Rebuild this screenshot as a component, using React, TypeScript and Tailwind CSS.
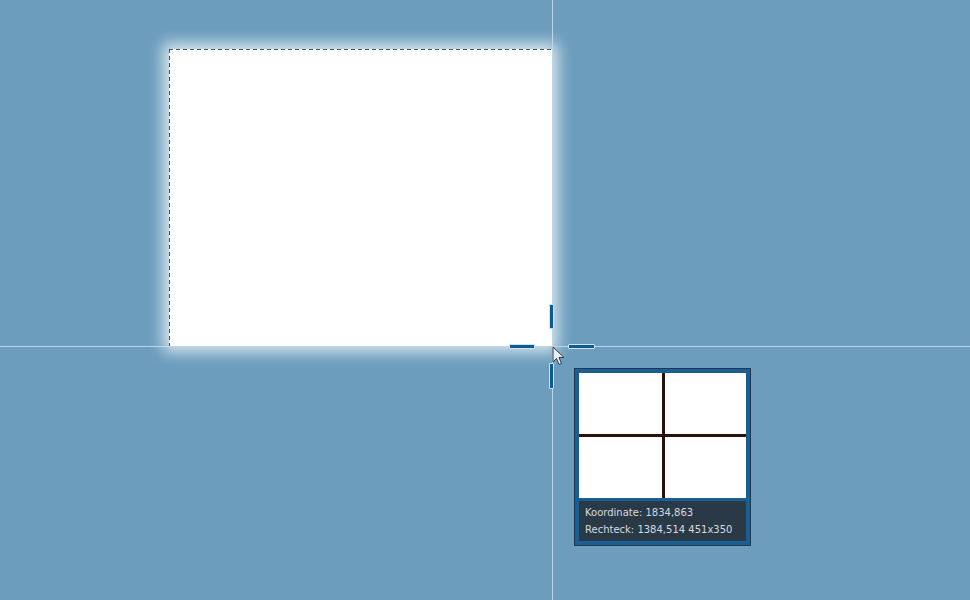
import React from "react";

const handle = "absolute rounded-[1px] border border-[#cfe3f0] bg-[#0e5a92]";

function Cursor() {
  return (
    <svg className="absolute left-[552px] top-[346px]" width="13" height="20" viewBox="0 0 13 20">
      <path d="M1 1 L1 16 L4.5 12.5 L7 18.5 L9.5 17.5 L7 11.5 L12 11.5 Z" fill="#e8eef3" stroke="#2b3a47" strokeWidth="1" strokeLinejoin="round" />
    </svg>
  );
}

function Magnifier() {
  return (
    <div className="absolute left-[574px] top-[368px] flex h-[178px] w-[177px] flex-col gap-[3px] border border-[#22384a] bg-[#1a5f94] p-1">
      {/* zoomed pixels with crosshair */}
      <div className="grid h-[125px] grid-cols-[83px_1fr] grid-rows-[61px_1fr] gap-[3px] bg-[#2a1208]">
        <div className="bg-white" />
        <div className="bg-white" />
        <div className="bg-white" />
        <div className="bg-white" />
      </div>
      <div className="flex flex-1 flex-col justify-center gap-[7px] bg-[#2a3946] px-[6px] font-['DejaVu_Sans',sans-serif] text-[10px] leading-none text-[#d5dbe0]">
        <span>Koordinate: 1834,863</span>
        <span>Rechteck: 1384,514 451x350</span>
      </div>
    </div>
  );
}

export default function App() {
  return (
    <div className="relative h-[600px] w-[970px] overflow-hidden bg-[#6c9dbd]">
      {/* selection */}
      <div className="absolute left-[169px] top-[49px] h-[297px] w-[383px] shadow-[0_0_14px_6px_rgba(255,255,255,0.75)] [background:repeating-linear-gradient(90deg,#2f5c7c_0_4px,transparent_4px_7px)_top_left/100%_1px_no-repeat,repeating-linear-gradient(180deg,#2f5c7c_0_4px,transparent_4px_7px)_top_left/1px_100%_no-repeat,white]" />

      {/* crosshair lines */}
      <div className="absolute left-[552px] top-0 h-full w-px bg-[#bcd6e8]" />
      <div className="absolute left-0 top-[346px] h-px w-full bg-[#bcd6e8]" />

      {/* handles */}
      <div className={`${handle} left-[549px] top-[304px] h-[25px] w-[5px]`} />
      <div className={`${handle} left-[549px] top-[363px] h-[26px] w-[5px]`} />
      <div className={`${handle} left-[509px] top-[344px] h-[5px] w-[26px]`} />
      <div className={`${handle} left-[568px] top-[344px] h-[5px] w-[27px]`} />

      <Cursor />
      <Magnifier />
    </div>
  );
}
